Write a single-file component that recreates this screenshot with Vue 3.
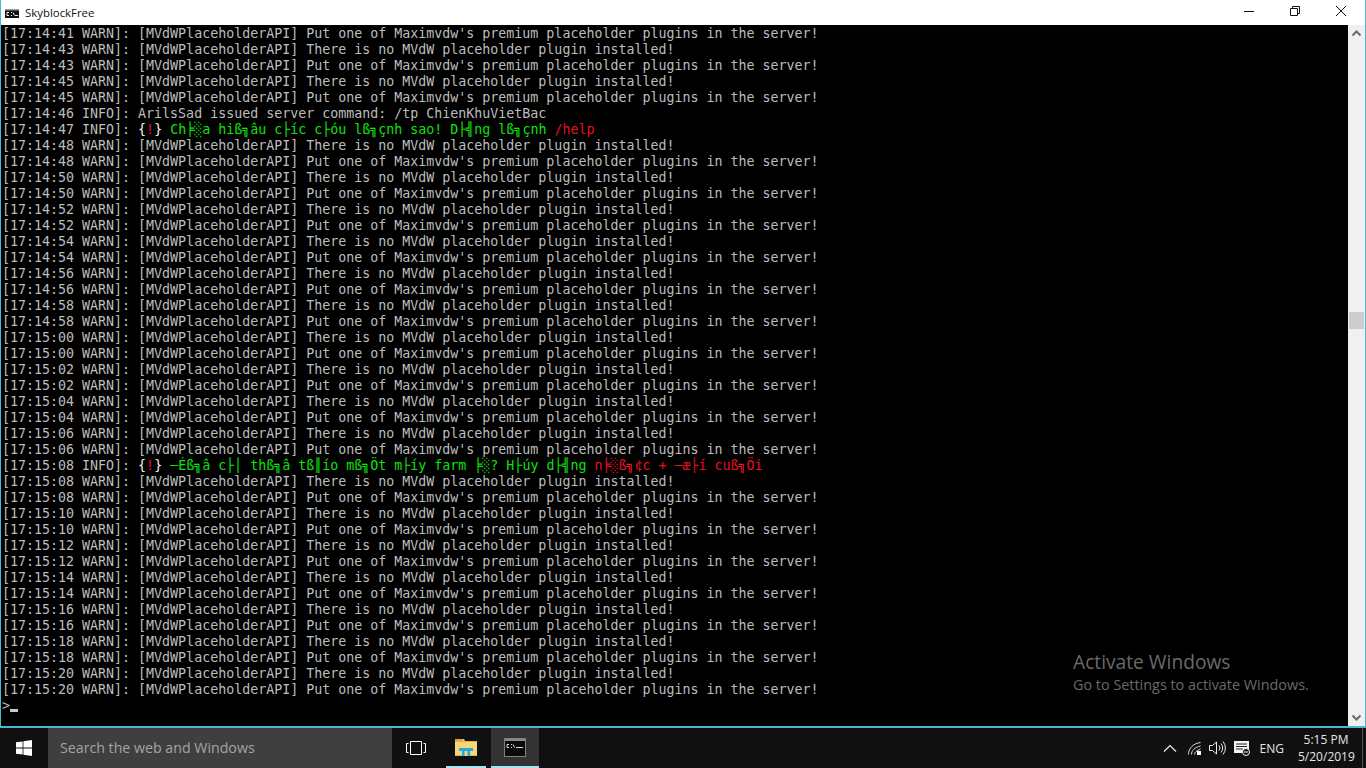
<script setup>
const put = "Put one of Maximvdw's premium placeholder plugins in the server!"
const none = 'There is no MVdW placeholder plugin installed!'
const api = '[MVdWPlaceholderAPI] '
const w = (t, m) => ({ segs: [{ c: '', t: `[17:${t} WARN]: ${api}${m}` }] })
const lines = [w('14:41', put), w('14:43', none), w('14:43', put), w('14:45', none), w('14:45', put)]
lines.push({ segs: [{ c: '', t: '[17:14:46 INFO]: ArilsSad issued server command: /tp ChienKhuVietBac' }] })
lines.push({ segs: [
  { c: '', t: '[17:14:47 INFO]: ' }, { c: 'white', t: '{' }, { c: 'red', t: '!' }, { c: 'white', t: '} ' },
  { c: 'green', t: 'Ch╞░a hiß╗âu c├íc c├óu lß╗çnh sao! D├╣ng lß╗çnh ' }, { c: 'red', t: '/help' }
] })
const times = ['14:48', '14:50', '14:52', '14:54', '14:56', '14:58', '15:00', '15:02', '15:04', '15:06']
times.forEach((t) => { lines.push(w(t, none)); lines.push(w(t, put)) })
lines.push({ segs: [
  { c: '', t: '[17:15:08 INFO]: ' }, { c: 'white', t: '{' }, { c: 'red', t: '!' }, { c: 'white', t: '} ' },
  { c: 'green', t: '─Éß╗â c├│ thß╗â tß║ío mß╗Öt m├íy farm ╞░? H├úy d├╣ng ' }, { c: 'red', t: 'n╞░ß╗¢c + ─æ├í cuß╗Öi' }
] })
const times2 = ['15:08', '15:10', '15:12', '15:14', '15:16', '15:18', '15:20']
times2.forEach((t) => { lines.push(w(t, none)); lines.push(w(t, put)) })
</script>

<template>
  <div class="screen">
    <div class="window">
      <header class="titlebar">
        <svg class="appicon" width="16" height="16" viewBox="0 0 16 16">
          <rect x="1" y="4" width="14" height="9" fill="#111" />
          <rect x="1" y="4" width="14" height="1.500" fill="#9a9a9a" />
          <path d="M3 7.500h2M3 7.500v3h2M7 7.500h1M7 10.500h1M9 7.500l1.500 3M11 10.500h3" stroke="#eee" stroke-width="1" fill="none" />
        </svg>
        <span class="title">SkyblockFree</span>
        <div class="controls">
          <button class="ctl"><svg width="10" height="10" viewBox="0 0 10 10"><path d="M0 5.500h10" stroke="#111" /></svg></button>
          <button class="ctl"><svg width="10" height="10" viewBox="0 0 10 10"><path d="M.5 2.500h7v7h-7zM2.500 2V.5h7v7H8" stroke="#111" fill="none" /></svg></button>
          <button class="ctl"><svg width="10" height="10" viewBox="0 0 10 10"><path d="M0 0l10 10M10 0L0 10" stroke="#111" fill="none" /></svg></button>
        </div>
      </header>
      <main class="console">
        <div class="output">
          <div v-for="(l, i) in lines" :key="i" class="line"><span v-for="(s, j) in l.segs" :key="j" :class="s.c">{{ s.t }}</span></div>
          <div class="line prompt">&gt;<span class="cursor"></span></div>
        </div>
        <aside class="scrollbar">
          <svg class="arrow" width="17" height="17" viewBox="0 0 17 17"><path d="M4.500 10.500l4-4 4 4" stroke="#6a6a6a" stroke-width="2" fill="none" /></svg>
          <div class="track"><div class="thumb"></div></div>
          <svg class="arrow" width="17" height="17" viewBox="0 0 17 17"><path d="M4.500 6.500l4 4 4-4" stroke="#6a6a6a" stroke-width="2" fill="none" /></svg>
        </aside>
        <div class="watermark">
          <div class="wm1">Activate Windows</div>
          <div class="wm2">Go to Settings to activate Windows.</div>
        </div>
      </main>
    </div>
    <footer class="taskbar">
      <div class="start">
        <svg width="16" height="16" viewBox="0 0 16 16" fill="#fff"><path d="M0 2.300l6.600-.9v6.200H0zM7.400 1.300L16 0v7.600H7.400zM0 8.400h6.600v6.200L0 13.700zM7.400 8.400H16V16l-8.600-1.200z" /></svg>
      </div>
      <div class="search">Search the web and Windows</div>
      <div class="tb-btn taskview">
        <svg width="20" height="16" viewBox="0 0 20 16" fill="none" stroke="#fff"><path d="M4.500 1.500h11v13h-11zM2.500 3.500h-2v9h2M17.500 3.500h2v9h-2" /></svg>
      </div>
      <div class="tb-btn running folder">
        <svg width="22" height="18" viewBox="0 0 22 18">
          <path d="M0 1h9l1 2h12v15H0z" fill="#f6d676" />
          <path d="M0 1h8v2H0z" fill="#d9a93f" />
          <path d="M0 3h22v1H0zM0 17h22v1H0z" fill="#dcb254" />
          <path d="M4 10h14v3h-3v5H7v-5H4z" fill="#22a7e8" />
          <path d="M9.500 13h3v5h-3z" fill="#f6d676" />
        </svg>
      </div>
      <div class="tb-btn running active">
        <svg width="22" height="19" viewBox="0 0 22 19">
          <rect x=".5" y=".5" width="21" height="18" fill="#0b0b0b" stroke="#808080" />
          <path d="M1 1h20v2H1z" fill="#8a8a8a" />
          <path d="M3 6.500h2M3 6.500v3h2M7 6.500h1M7 9.500h1M9 6.500l1.500 3M12 9.500h7" stroke="#ddd" fill="none" />
        </svg>
      </div>
      <div class="tray">
        <svg class="chev" width="14" height="8" viewBox="0 0 14 8" fill="none" stroke="#eee" stroke-width="1.200"><path d="M1 7.500l6-6 6 6" /></svg>
        <svg width="13" height="13" viewBox="0 0 13 13" fill="none" stroke="#ddd"><path d="M.5 12.500C.5 6.500 5 1.500 12.500.5M3.500 12.500c0-4 3-7 9-8.500M6.500 12.500c0-2 2-4 6-5.500" /><rect x="9" y="9" width="4" height="4" fill="#fff" stroke="none" /></svg>
        <svg width="17" height="14" viewBox="0 0 17 14" fill="none" stroke="#eee"><path d="M.5 4.500h3l4-3.500v12l-4-3.500h-3zM10 4.500a4 4 0 010 5M12 2.500a7 7 0 010 9M14 .5a10 10 0 010 13" /></svg>
        <svg width="17" height="17" viewBox="0 0 17 17"><path d="M0 1h15v12H0z" fill="#f5f5f5" /><path d="M2 4h11M2 6.500h11M2 9h7" stroke="#222" /><circle cx="12" cy="12" r="3.500" fill="#111" stroke="#f5f5f5" /><path d="M10 12h4" stroke="#f5f5f5" /></svg>
        <span class="lang">ENG</span>
        <div class="clock"><div>5:15 PM</div><div>5/20/2019</div></div>
      </div>
      <div class="showdesk"></div>
    </footer>
  </div>
</template>

<style>
html, body { margin: 0; overflow: hidden; background: #000; }
</style>

<style scoped>
.screen { width: 1366px; height: 768px; display: flex; flex-direction: column; font-family: "Open Sans", "Noto Sans", sans-serif; }
.window { flex: 1; min-height: 0; display: flex; flex-direction: column; background: #fff; border: 1px solid #4fb6cf; border-top: 0; border-bottom-width: 2px; }
.titlebar { height: 25px; flex: none; display: flex; align-items: center; padding-left: 3px; background: #fff; }
.appicon { margin: 1px 5px 0 0; }
.title { font-size: 11.4px; color: #111; }
.controls { margin-left: auto; display: flex; height: 100%; margin-right: 1px; }
.ctl { width: 46px; height: 100%; border: 0; padding: 0 0 3px; background: none; display: flex; align-items: center; justify-content: center; }
.console { flex: 1; min-height: 0; display: flex; background: #000; position: relative; }
.output { flex: 1; min-width: 0; padding: 1px 0 0 1px; font-family: "DejaVu Sans Mono", "Liberation Mono", monospace; font-size: 13.3px; line-height: 16px; color: #bdbdbd; }
.line { height: 16px; white-space: pre; }
.white { color: #f2f2f2; }
.red { color: #e81123; }
.green { color: #10e010; }
.cursor { display: inline-block; width: 8px; height: 3px; background: #c8c8c8; vertical-align: -2px; }
.scrollbar { width: 17px; flex: none; background: #f0f0f0; display: flex; flex-direction: column; }
.arrow { flex: none; display: block; }
.track { flex: 1; padding: 270px 1px 0; }
.thumb { height: 17px; background: #cdcdcd; }
.watermark { position: absolute; left: 1072px; bottom: 31px; color: #6a6a6a; white-space: nowrap; }
.wm1 { font-size: 19.2px; line-height: 26px; }
.wm2 { font-size: 14.4px; line-height: 20px; }
.taskbar { height: 40px; flex: none; display: flex; align-items: stretch; background: #101010; }
.start { width: 48px; display: flex; align-items: center; justify-content: center; }
.search { width: 344px; background: #3f3f3f; color: #a4a4a4; font-size: 14.2px; line-height: 40px; padding-left: 12px; box-sizing: border-box; }
.tb-btn { width: 48px; display: flex; align-items: center; justify-content: center; box-sizing: border-box; }
.running { border-bottom: 2px solid #a5e3f5; }
.folder { width: 40px; margin: 0 5px 0 6px; }
.active { background: #333; }
.tray { margin-left: auto; display: flex; align-items: center; gap: 8px; color: #e6e6e6; font-size: 12px; }
.chev { margin-right: 3px; }
.lang { margin-left: 1px; }
.clock { text-align: center; line-height: 17px; margin-left: 6px; width: 56px; }
.showdesk { width: 4px; margin-left: 8px; box-sizing: border-box; border-left: 1px solid #555; }
</style>
